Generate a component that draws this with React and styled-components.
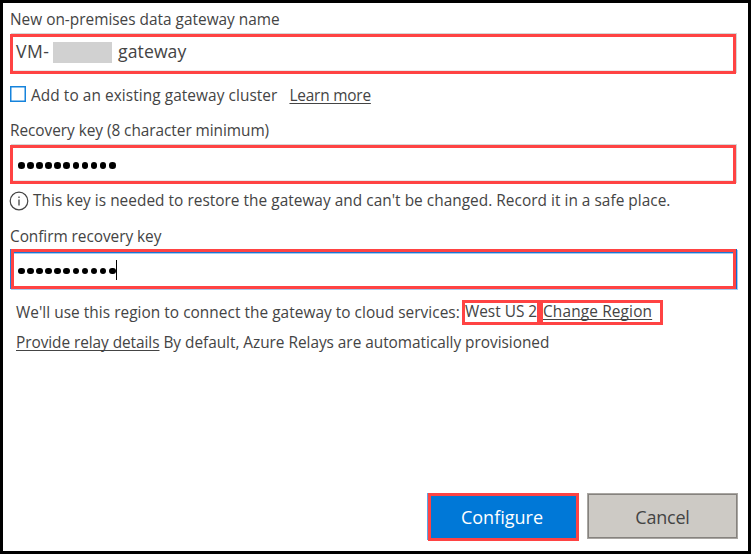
import React from 'react';
import styled, { createGlobalStyle, css } from 'styled-components';

const GlobalStyle = createGlobalStyle`
  * { box-sizing: border-box; }
  body { margin: 0; background: #fff; }
`;

const Dialog = styled.main`
  display: flex;
  flex-direction: column;
  width: 751px;
  height: 554px;
  padding: 6px 10px 10px 7px;
  border: 3px solid #000;
  background: #fff;
  color: #444;
  font-family: 'Open Sans', 'Noto Sans', sans-serif;
  font-size: 15.4px;
  line-height: 20px;
  white-space: pre;
`;

const Text = styled.span`
  padding-top: 2px;
  letter-spacing: ${(p) => p.$track || 0}px;
`;

const Label = styled.label`
  height: 20px;
  margin-top: ${(p) => p.$top || 0}px;
  letter-spacing: ${(p) => p.$track || 0}px;
  line-height: 21px;
`;

const Field = styled.div`
  display: flex;
  align-items: center;
  flex: none;
  width: ${(p) => (p.$focused ? 725 : 726)}px;
  height: ${(p) => p.$height}px;
  margin-top: ${(p) => p.$top}px;
  margin-left: ${(p) => (p.$focused ? 1 : 0)}px;
  padding-top: ${(p) => (p.$focused ? 4 : 2)}px;
  padding-left: ${(p) => (p.$focused ? 4 : 5)}px;
  border: 3px solid #ff4343;
  ${(p) =>
    p.$focused
      ? css`
          box-shadow: inset 0 1px #1a78d6, inset 0 2px #a3cbf0,
            1px 0 #0f6cd0, -1px 0 #2680da, 2px 1px #a3cbf0, 0 1px #a3cbf0;
        `
      : css`
          box-shadow: 1px -1px #d6d6d6, inset 0 -1px #e9e9e9;
        `}
`;

const GatewayName = styled.div`
  display: flex;
  align-items: center;
  height: 24px;
  margin: -9px 0 0 -2px;
  font-size: 17.6px;
  line-height: 24px;
`;

const Prefix = styled.span`
  width: 37px;
  letter-spacing: 0.5px;
`;

const Suffix = styled.span`
  letter-spacing: 0.1px;
`;

const Redacted = styled.span`
  width: 59px;
  height: 21px;
  margin: 4px 6px 0 0;
  background: #d1d1d1;
`;

const Dots = styled.span`
  display: flex;
  gap: 2.5px;
`;

const Dot = styled.i`
  width: 6.6px;
  height: 6.6px;
  border-radius: 50%;
  background: #000;
`;

const Caret = styled.i`
  width: 1px;
  height: 20px;
  margin-top: -3px;
  background: #000;
`;

const Row = styled.div`
  display: flex;
  align-items: center;
  flex: none;
  height: ${(p) => p.$height || 20}px;
  margin-top: ${(p) => p.$top}px;
  padding-left: ${(p) => p.$indent || 0}px;
`;

const Checkbox = styled.span`
  width: 16px;
  height: 16px;
  margin: -2px 5px 0 0;
  border: 1px solid #1683dc;
  box-shadow: inset 0 0 0 0.5px #1683dc;
`;

const Link = styled.a`
  margin-left: ${(p) => p.$left || 0}px;
  padding-top: 2px;
  letter-spacing: ${(p) => p.$track || 0}px;
  text-decoration: underline;
  text-decoration-thickness: 1px;
  text-underline-offset: 2px;
  text-decoration-skip-ink: none;
`;

const InfoIcon = styled.svg`
  width: 20px;
  height: 20px;
  margin: 2px 4px 0 -1px;
`;

const Highlight = styled.span`
  display: flex;
  align-items: center;
  width: ${(p) => p.$width}px;
  height: 25px;
  padding-bottom: 3px;
  margin-left: auto;
  border: 3px solid #ff4343;

  & + & {
    margin-left: 0;
  }
`;

const RegionRow = styled(Row)`
  width: 653px;
`;

const RegionText = styled(Text)`
  margin-top: -2px;
`;

const Actions = styled.footer`
  display: flex;
  align-items: flex-start;
  gap: 8px;
  height: 48px;
  margin-top: auto;
  padding-left: 418px;
`;

const Button = styled.button`
  flex: none;
  padding: 0;
  border: 0;
  font: 18px/24px 'Open Sans', 'Noto Sans', sans-serif;
  letter-spacing: ${(p) => p.$track || 0}px;
`;

const PrimaryButton = styled(Button)`
  width: 151px;
  height: 48px;
  padding-right: 3px;
  border: 3px solid #ff4343;
  background: #0078d7;
  color: #fff;
  box-shadow: -1px -1px #5ba7e5;
  clip-path: inset(0 0 0 -1px);
`;

const SecondaryButton = styled(Button)`
  width: 151px;
  height: 46px;
  padding: 1px 0 0;
  border: 1px solid #a9a6a2;
  background: #cdcac5;
  color: #444;
  box-shadow: inset 0 0 0 1px #85827e;
`;

function MaskedKey({ length }) {
  return (
    <Dots>
      {Array.from({ length }, (_, i) => (
        <Dot key={i} />
      ))}
    </Dots>
  );
}

export default function App() {
  return (
    <>
      <GlobalStyle />
      <Dialog>
        <Label>New on-premises data gateway name</Label>
        <Field $top={5} $height={40}>
          <GatewayName>
            <Prefix>VM-</Prefix>
            <Redacted />
            <Suffix>gateway</Suffix>
          </GatewayName>
        </Field>

        <Row $top={11}>
          <Checkbox />
          <Text $track={0.07}>Add to an existing gateway cluster</Text>
          <Link $left={12} $track={-0.2}>Learn more</Link>
        </Row>

        <Label $top={15} $track={-0.05}>Recovery key (8 character minimum)</Label>
        <Field $top={5} $height={39}>
          <MaskedKey length={11} />
        </Field>

        <Row $top={6}>
          <InfoIcon viewBox="0 0 20 20" fill="none" stroke="#444">
            <circle cx="10" cy="10" r="8.8" strokeWidth="1.2" />
            <path d="M10 8.4v6M10 5.5v1.5" strokeWidth="1.3" />
          </InfoIcon>
          <Text $track={0.03}>
            This key is needed to restore the gateway and can't be changed. Record it in a safe place.
          </Text>
        </Row>

        <Label $top={16} $track={-0.05}>Confirm recovery key</Label>
        <Field $top={3} $height={40} $focused>
          <MaskedKey length={11} />
          <Caret />
        </Field>

        <RegionRow $top={11} $height={25} $indent={6}>
          <RegionText $track={0.04}>We'll use this region to connect the gateway to cloud services:</RegionText>
          <Highlight $width={78}>
            <Text>West US 2</Text>
          </Highlight>
          <Highlight $width={123}>
            <Link $track={0.15}>Change Region</Link>
          </Highlight>
        </RegionRow>

        <Row $top={7} $indent={6}>
          <Link $track={-0.06}>Provide relay details</Link>
          <Text $track={-0.03}> By default, Azure Relays are automatically provisioned</Text>
        </Row>

        <Actions>
          <PrimaryButton>Configure</PrimaryButton>
          <SecondaryButton $track={-0.2}>Cancel</SecondaryButton>
        </Actions>
      </Dialog>
    </>
  );
}
